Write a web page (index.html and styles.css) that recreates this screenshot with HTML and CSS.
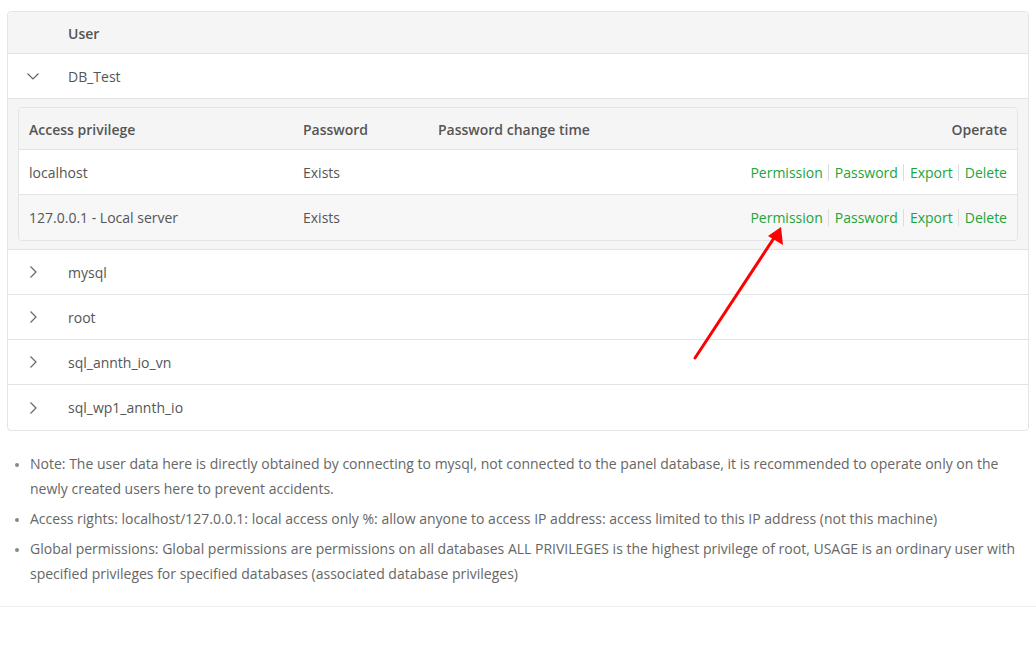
FILE: index.html
```html
<!DOCTYPE html>
<html>
<head>
<meta charset="utf-8">
<link rel="stylesheet" href="styles.css">
</head>
<body>
<div class="page">
  <div class="users">
    <div class="row head">
      <div class="c-icon"></div>
      <div class="c-name">User</div>
    </div>
    <div class="row">
      <div class="c-icon"><svg width="14" height="14" viewBox="0 0 14 14"><path d="M1.5 4.5 L7 10 L12.5 4.5" fill="none" stroke="#666" stroke-width="1.2"/></svg></div>
      <div class="c-name">DB_Test</div>
    </div>
    <div class="expand">
      <div class="inner">
        <div class="irow ihead">
          <div class="ic1">Access privilege</div>
          <div class="ic2">Password</div>
          <div class="ic3">Password change time</div>
          <div class="ic4">Operate</div>
        </div>
        <div class="irow">
          <div class="ic1">localhost</div>
          <div class="ic2">Exists</div>
          <div class="ic3"></div>
          <div class="ic4 ops"><a>Permission</a><i></i><a>Password</a><i></i><a>Export</a><i></i><a>Delete</a></div>
        </div>
        <div class="irow alt">
          <div class="ic1">127.0.0.1 - Local server</div>
          <div class="ic2">Exists</div>
          <div class="ic3"></div>
          <div class="ic4 ops"><a>Permission</a><i></i><a>Password</a><i></i><a>Export</a><i></i><a>Delete</a></div>
        </div>
      </div>
    </div>
    <div class="row">
      <div class="c-icon"><svg width="14" height="14" viewBox="0 0 14 14"><path d="M4.5 1.5 L10 7 L4.5 12.5" fill="none" stroke="#666" stroke-width="1.2"/></svg></div>
      <div class="c-name">mysql</div>
    </div>
    <div class="row">
      <div class="c-icon"><svg width="14" height="14" viewBox="0 0 14 14"><path d="M4.5 1.5 L10 7 L4.5 12.5" fill="none" stroke="#666" stroke-width="1.2"/></svg></div>
      <div class="c-name">root</div>
    </div>
    <div class="row">
      <div class="c-icon"><svg width="14" height="14" viewBox="0 0 14 14"><path d="M4.5 1.5 L10 7 L4.5 12.5" fill="none" stroke="#666" stroke-width="1.2"/></svg></div>
      <div class="c-name">sql_annth_io_vn</div>
    </div>
    <div class="row last">
      <div class="c-icon"><svg width="14" height="14" viewBox="0 0 14 14"><path d="M4.5 1.5 L10 7 L4.5 12.5" fill="none" stroke="#666" stroke-width="1.2"/></svg></div>
      <div class="c-name">sql_wp1_annth_io</div>
    </div>
  </div>
  <ul class="notes">
    <li>Note: The user data here is directly obtained by connecting to mysql, not connected to the panel database, it is recommended to operate only on the newly created users here to prevent accidents.</li>
    <li>Access rights: localhost/127.0.0.1: local access only %: allow anyone to access IP address: access limited to this IP address (not this machine)</li>
    <li>Global permissions: Global permissions are permissions on all databases ALL PRIVILEGES is the highest privilege of root, USAGE is an ordinary user with specified privileges for specified databases (associated database privileges)</li>
  </ul>
  <div class="rule"></div>
</div>
<svg class="arrow" width="1036" height="658" viewBox="0 0 1036 658">
  <line x1="695" y1="358" x2="774" y2="238" stroke="#f00" stroke-width="3" stroke-linecap="round"/>
  <polygon points="781,227 783,245 768,236" fill="#f00"/>
</svg>
</body>
</html>
```
FILE: styles.css
```css
html, body {
  margin: 0;
  padding: 0;
  background: #fff;
}
body {
  font-family: "Open Sans", "Noto Sans", sans-serif;
  font-size: 14px;
  color: #555;
  position: relative;
  width: 1036px;
  height: 658px;
  overflow: hidden;
}
.page {
  padding: 11px 7px 0 7px;
}
.users {
  border: 1px solid #e4e4e4;
  border-radius: 4px;
  overflow: hidden;
}
.row {
  display: flex;
  align-items: center;
  height: 44px;
  border-bottom: 1px solid #e4e4e4;
  color: #555;
}
.row.last {
  border-bottom: none;
  height: 45px;
}
.row.head {
  background: #f5f5f5;
  font-weight: 600;
  padding-top: 1px;
  box-sizing: border-box;
  height: 42px;
}
.c-icon {
  width: 50px;
  display: flex;
  justify-content: center;
  align-items: center;
}
.c-name {
  padding-left: 10px;
}
.expand {
  background: #f5f5f6;
  padding: 8px 10px;
  border-bottom: 1px solid #e4e4e4;
}
.inner {
  border: 1px solid #e4e4e4;
  border-radius: 4px;
  overflow: hidden;
}
.irow {
  display: flex;
  align-items: center;
  height: 44px;
  border-bottom: 1px solid #e4e4e4;
  background: #fff;
}
.irow.alt {
  background: #f7f7f8;
  border-bottom: none;
  height: 45px;
}
.irow.ihead {
  height: 42px;
  box-sizing: border-box;
  padding-top: 2px;
  background: #f5f5f5;
  font-weight: 600;
}
.ic1 { width: 254px; padding: 0 10px; }
.ic2 { width: 115px; padding: 0 10px; }
.ic3 { flex: 1; padding: 0 10px; }
.ic4 { padding: 0 10px; text-align: right; }
.ops {
  display: flex;
  align-items: center;
}
.ops a {
  color: #20a53a;
}
.ops i {
  display: inline-block;
  width: 1px;
  height: 17px;
  background: #ddd;
  margin: 0 6px 0 5px;
}
.notes {
  margin: 20px 0 0 0;
  padding: 0 0 0 23px;
  color: #666;
  font-size: 14px;
  line-height: 25px;
}
.notes li {
  margin-bottom: 5px;
}
.notes li::marker {
  color: #888;
  font-size: 11px;
}
.rule {
  margin: 20px -7px 0 -7px;
  border-top: 1px solid #f0f0f0;
}
.arrow {
  position: absolute;
  left: 0;
  top: 0;
  pointer-events: none;
}
```
